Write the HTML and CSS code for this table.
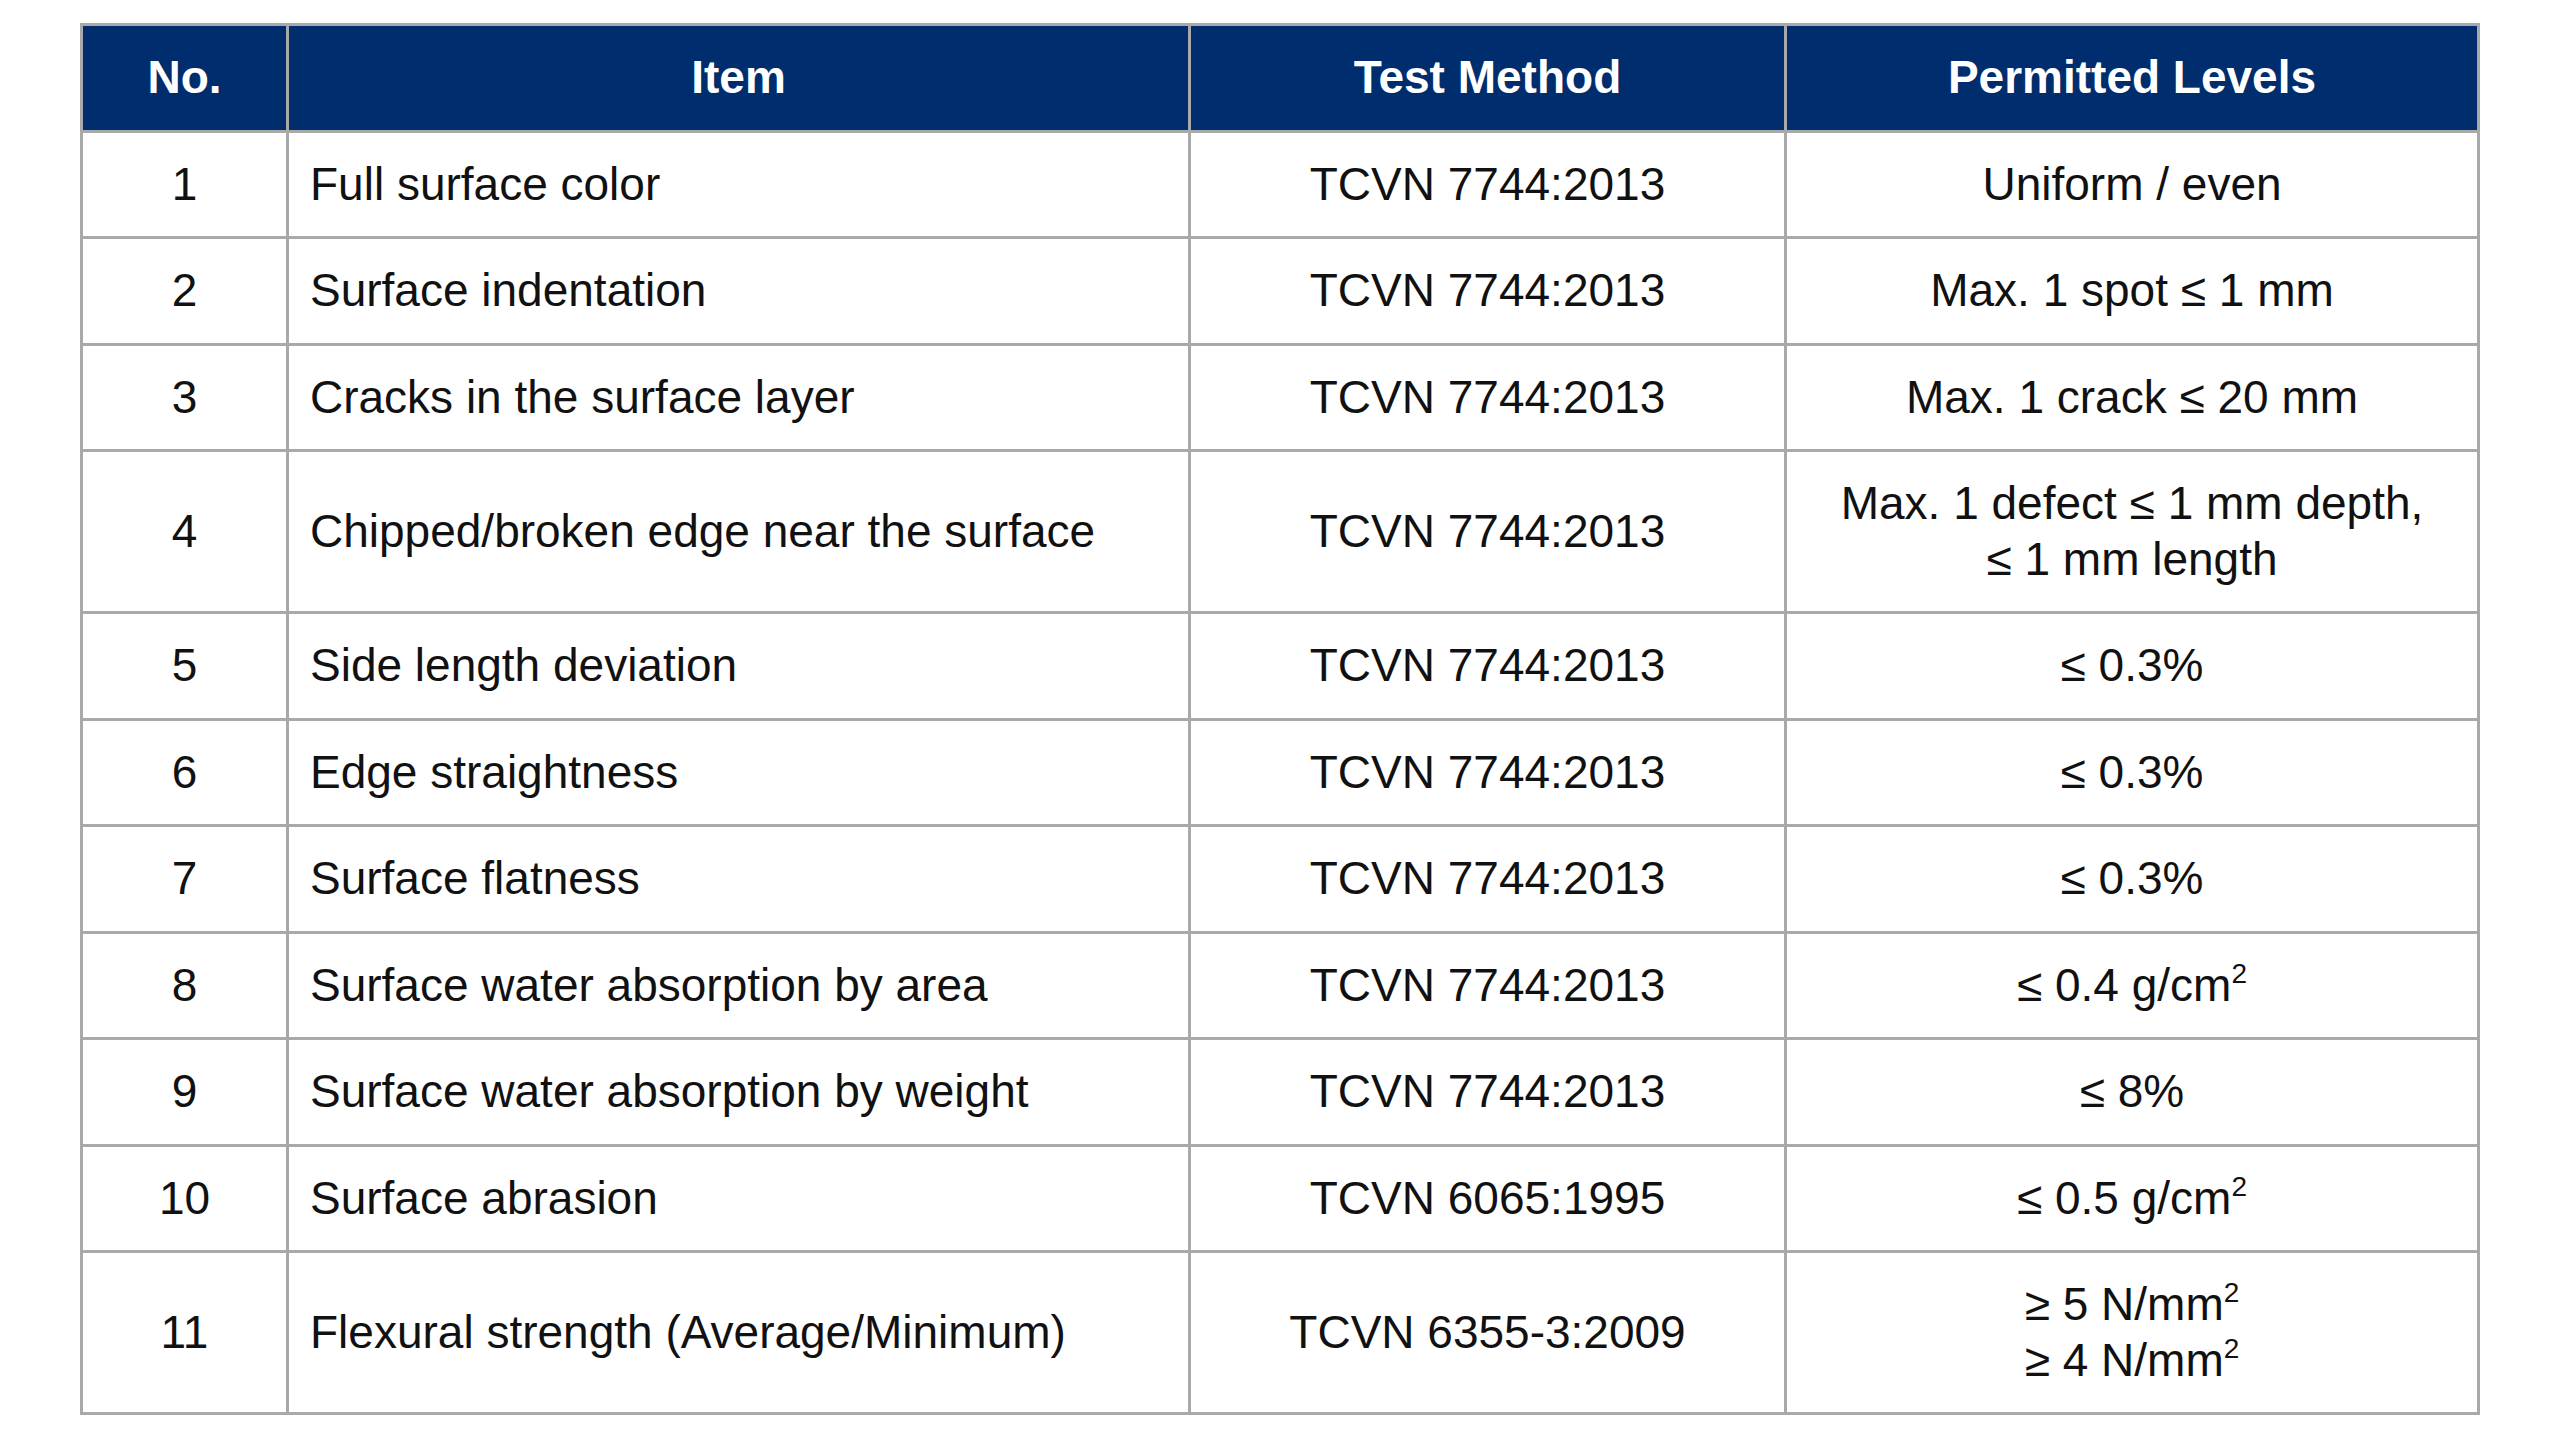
FILE: index.html
```html
<!DOCTYPE html>
<html>
<head>
<meta charset="utf-8">
<link rel="stylesheet" href="styles.css">
</head>
<body>
<table class="spec">
  <colgroup>
    <col class="c-no">
    <col class="c-item">
    <col class="c-method">
    <col class="c-level">
  </colgroup>
  <thead>
    <tr><th>No.</th><th>Item</th><th>Test Method</th><th>Permitted Levels</th></tr>
  </thead>
  <tbody>
    <tr><td class="ctr">1</td><td>Full surface color</td><td class="ctr">TCVN 7744:2013</td><td class="ctr">Uniform / even</td></tr>
    <tr><td class="ctr">2</td><td>Surface indentation</td><td class="ctr">TCVN 7744:2013</td><td class="ctr">Max. 1 spot ≤ 1 mm</td></tr>
    <tr><td class="ctr">3</td><td>Cracks in the surface layer</td><td class="ctr">TCVN 7744:2013</td><td class="ctr">Max. 1 crack ≤ 20 mm</td></tr>
    <tr><td class="ctr">4</td><td>Chipped/broken edge near the surface</td><td class="ctr">TCVN 7744:2013</td><td class="ctr">Max. 1 defect ≤ 1 mm depth,<br>≤ 1 mm length</td></tr>
    <tr><td class="ctr">5</td><td>Side length deviation</td><td class="ctr">TCVN 7744:2013</td><td class="ctr">≤ 0.3%</td></tr>
    <tr><td class="ctr">6</td><td>Edge straightness</td><td class="ctr">TCVN 7744:2013</td><td class="ctr">≤ 0.3%</td></tr>
    <tr><td class="ctr">7</td><td>Surface flatness</td><td class="ctr">TCVN 7744:2013</td><td class="ctr">≤ 0.3%</td></tr>
    <tr><td class="ctr">8</td><td>Surface water absorption by area</td><td class="ctr">TCVN 7744:2013</td><td class="ctr">≤ 0.4 g/cm<sup>2</sup></td></tr>
    <tr><td class="ctr">9</td><td>Surface water absorption by weight</td><td class="ctr">TCVN 7744:2013</td><td class="ctr">≤ 8%</td></tr>
    <tr><td class="ctr">10</td><td>Surface abrasion</td><td class="ctr">TCVN 6065:1995</td><td class="ctr">≤ 0.5 g/cm<sup>2</sup></td></tr>
    <tr><td class="ctr">11</td><td>Flexural strength (Average/Minimum)</td><td class="ctr">TCVN 6355-3:2009</td><td class="ctr">≥ 5 N/mm<sup>2</sup><br>≥ 4 N/mm<sup>2</sup></td></tr>
  </tbody>
</table>
</body>
</html>
```

FILE: styles.css
```css
html, body {
  margin: 0;
  padding: 0;
  background: #ffffff;
}
body {
  padding: 23px 0 0 80px;
  font-family: "Liberation Sans", Arial, sans-serif;
}
.spec {
  border-collapse: collapse;
  table-layout: fixed;
  width: 2397px;
  font-size: 46px;
  line-height: 55.5px;
  color: #111111;
}
.c-no { width: 206px; }
.c-item { width: 902px; }
.c-method { width: 596px; }
.c-level { width: 693px; }
.spec th,
.spec td {
  border: 3px solid #a9a9a9;
  padding: 24px 21px;
  vertical-align: middle;
}
.spec th {
  background: #002d6d;
  color: #ffffff;
  font-weight: bold;
  text-align: center;
}
.spec td {
  text-align: left;
}
.spec td.ctr {
  text-align: center;
}
.spec sup {
  font-size: 28px;
  line-height: 0;
  vertical-align: 18px;
}
```
